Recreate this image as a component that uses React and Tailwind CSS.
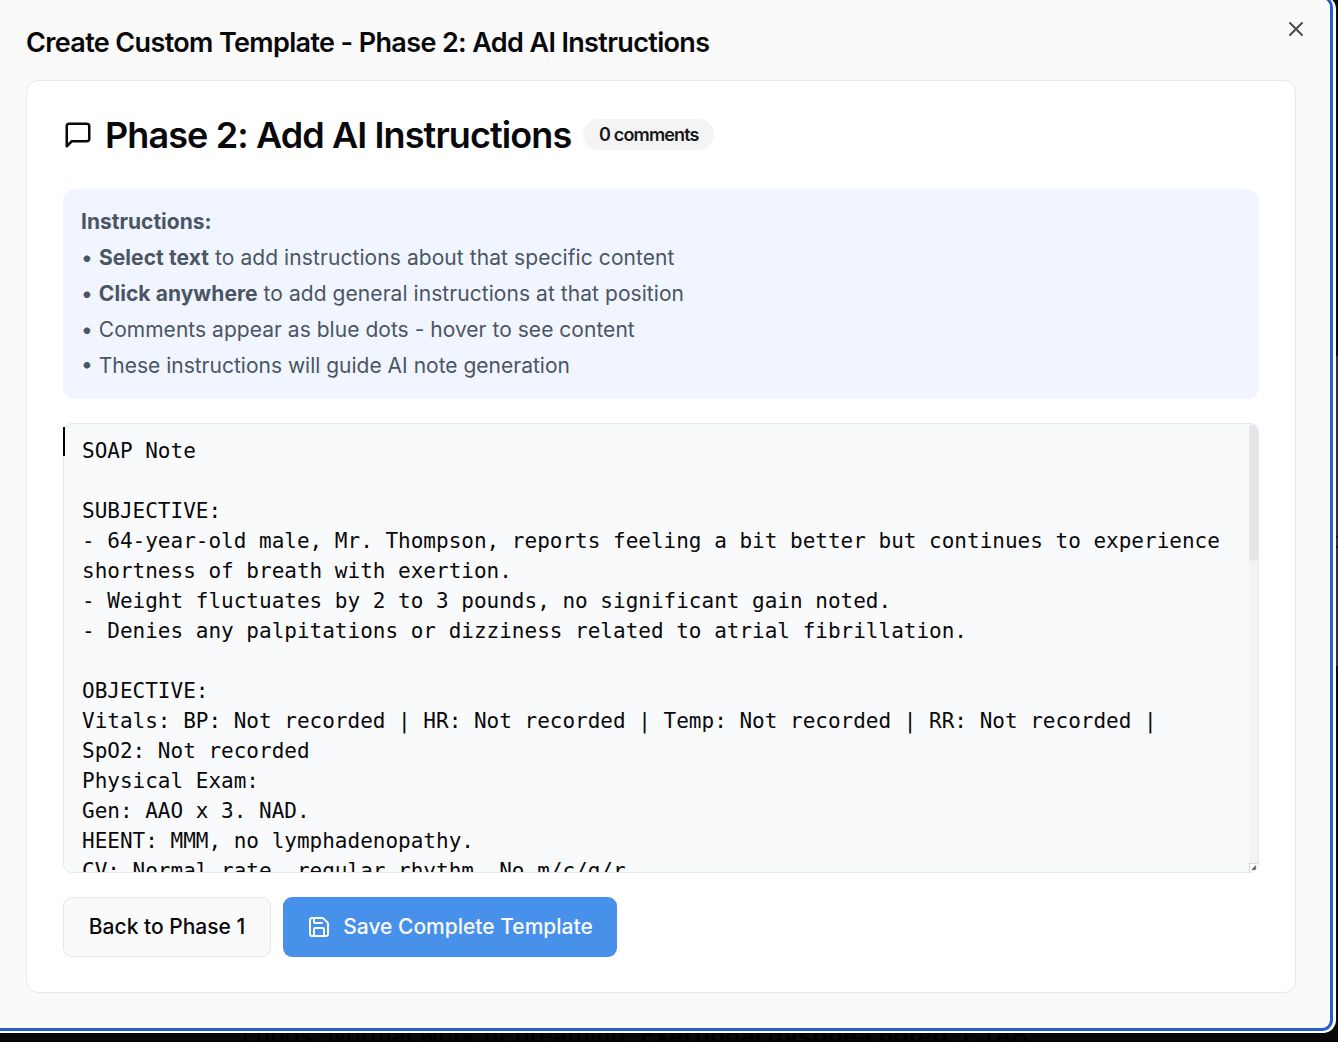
import React from "react";
import { X, Save } from "lucide-react";

const note = `SOAP Note

SUBJECTIVE:
- 64-year-old male, Mr. Thompson, reports feeling a bit better but continues to experience shortness of breath with exertion.
- Weight fluctuates by 2 to 3 pounds, no significant gain noted.
- Denies any palpitations or dizziness related to atrial fibrillation.

OBJECTIVE:
Vitals: BP: Not recorded | HR: Not recorded | Temp: Not recorded | RR: Not recorded | SpO2: Not recorded
Physical Exam:
Gen: AAO x 3. NAD.
HEENT: MMM, no lymphadenopathy.
CV: Normal rate, regular rhythm. No m/c/g/r.`;

function MessageIcon() {
  return (
    <svg
      width="30"
      height="30"
      viewBox="0 0 24 24"
      fill="none"
      stroke="currentColor"
      strokeWidth="2"
      strokeLinecap="round"
      strokeLinejoin="round"
    >
      <path d="M21 15a2 2 0 0 1-2 2H7l-4 4V5a2 2 0 0 1 2-2h14a2 2 0 0 1 2 2z" />
    </svg>
  );
}

export default function App() {
  return (
    <div className="relative h-[1042px] w-[1338px] overflow-hidden bg-[#090909] font-['Inter',sans-serif] text-[#09090b]">
      <div className="absolute top-[356px] right-0 h-[310px] w-[6px] bg-[#303030]" />
      <div className="absolute top-[536px] right-0 h-3 w-[3px] border-y-2 border-[#111]" />
      <p className="absolute top-[1021px] left-[242px] text-[24px] leading-[30px] tracking-[0.36px] whitespace-nowrap text-black">
        Lungs: Normal work of breathing. <b>Exertional dyspnea noted.</b> CTAB
      </p>
      <div className="absolute bottom-0 left-0 h-px w-full bg-black" />

      <div className="relative -mt-[4px] -ml-4 h-[1037px] w-[1352px] rounded-[13px] bg-white pr-[3px] pb-[2px]">
        <main className="h-full rounded-[11px] border-[3px] border-[#2860c8] bg-[#fafafa] pt-[24px] pr-[35px] pl-[39px]">
          <header className="h-[56.5px]">
            <h1 className="text-[27px] leading-[40px] font-semibold tracking-[-0.64px] whitespace-nowrap">
              Create Custom Template - Phase 2: Add AI Instructions
            </h1>
          </header>
          <button className="absolute top-[20.5px] right-[28px]" aria-label="Close">
            <X size={24} strokeWidth={2} color="#48484a" />
          </button>

          <section className="h-[913.5px] w-[1270px] rounded-xl border border-[#e9e9eb] bg-white px-9 pt-[33px]">
            <div className="flex h-[42px] items-center">
              <MessageIcon />
              <h2 className="ml-3 text-[36px] leading-[42px] font-semibold tracking-[-0.9px] whitespace-nowrap">
                Phase 2: Add AI Instructions
              </h2>
              <span className="ml-3 flex h-[31px] w-[131px] items-center justify-center rounded-full bg-[#f4f4f5] text-[18px] font-semibold tracking-[-0.85px] whitespace-nowrap text-[#18181b]">
                0 comments
              </span>
            </div>

            <div className="mt-[33px] h-[210px] rounded-xl bg-[#f0f5ff] px-[18px] pt-[15px] text-[21px] leading-9 text-[#4b5563]">
              <p className="font-bold">Instructions:</p>
              <p className="tracking-[0.08px]">• <b>Select text</b> to add instructions about that specific content</p>
              <p className="tracking-[0.06px]">• <b>Click anywhere</b> to add general instructions at that position</p>
              <p className="tracking-[0.03px]">• Comments appear as blue dots - hover to see content</p>
              <p>• These instructions will guide AI note generation</p>
            </div>

            <div className="relative mt-6 h-[450px]">
              <div className="flex h-full overflow-hidden rounded-[9px] border border-[#e7e8eb] bg-[#f9fafb]">
                <pre className="h-full w-[1185px] shrink-0 overflow-hidden pt-3 pr-[18px] pl-[18px] font-['DejaVu_Sans_Mono',monospace] text-[21px] leading-[30px] whitespace-pre-wrap">
                  {note}
                </pre>
                <div className="flex h-full w-[9px] flex-col bg-[#f3f3f5]">
                  <div className="h-[137px] rounded-full bg-[#e4e5e9]" />
                  <div className="mt-auto flex h-[9px] items-center justify-center border-t border-l border-[#d8d8da] bg-white">
                    <svg width="6" height="6" viewBox="0 0 6 6" stroke="#555" strokeWidth="1.2">
                      <path d="M1 5 5 1M3 5 5 3" />
                    </svg>
                  </div>
                </div>
              </div>
              <div className="absolute top-[4px] left-0 h-[29px] w-[2px] bg-black" />
            </div>

            <div className="mt-6 flex gap-3">
              <button className="h-[60px] w-[208px] rounded-[9px] border border-[#e6e6e8] bg-[#fafafa] text-[21px] font-medium whitespace-nowrap">
                Back to Phase 1
              </button>
              <button className="flex h-[60px] w-[334px] items-center justify-center gap-3 rounded-[9px] bg-[#4891eb] text-[21px] font-medium whitespace-nowrap text-[#fafafa]">
                <Save size={24} strokeWidth={2} />
                Save Complete Template
              </button>
            </div>
          </section>
        </main>
      </div>
    </div>
  );
}
